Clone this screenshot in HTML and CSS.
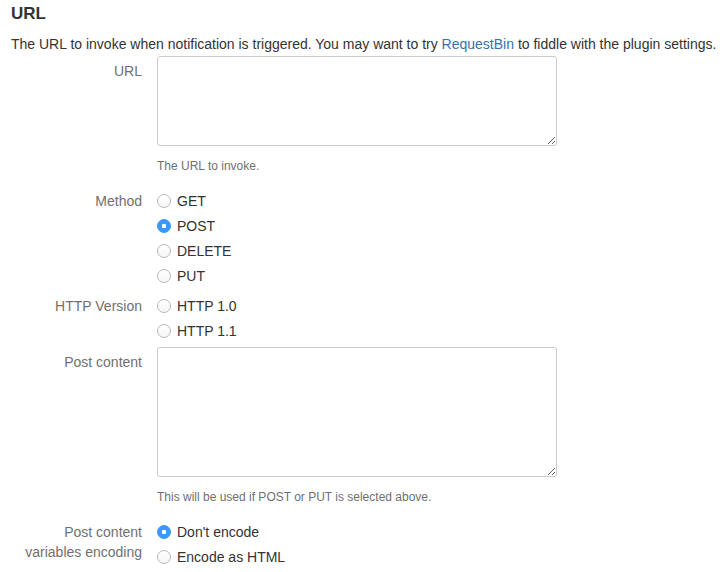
FILE: index.html
```html
<!DOCTYPE html>
<html>
<head>
<meta charset="utf-8">
<link rel="stylesheet" href="styles.css">
</head>
<body>
<div class="page">
  <h2 class="title">URL</h2>
  <p class="desc">The URL to invoke when notification is triggered. You may want to try <a href="#">RequestBin</a> to fiddle with the plugin settings.</p>

  <div class="group group-text">
    <label class="label">URL</label>
    <div class="field">
      <textarea class="textarea url"></textarea>
      <div class="help">The URL to invoke.</div>
    </div>
  </div>

  <div class="group group-radio">
    <label class="label">Method</label>
    <div class="field">
      <label class="radio"><input type="radio" name="m"><span>GET</span></label>
      <label class="radio"><input type="radio" name="m" checked><span>POST</span></label>
      <label class="radio"><input type="radio" name="m"><span>DELETE</span></label>
      <label class="radio"><input type="radio" name="m"><span>PUT</span></label>
    </div>
  </div>

  <div class="group group-radio tight">
    <label class="label">HTTP Version</label>
    <div class="field">
      <label class="radio"><input type="radio" name="v"><span>HTTP 1.0</span></label>
      <label class="radio"><input type="radio" name="v"><span>HTTP 1.1</span></label>
    </div>
  </div>

  <div class="group group-text tight2">
    <label class="label">Post content</label>
    <div class="field">
      <textarea class="textarea post"></textarea>
      <div class="help">This will be used if POST or PUT is selected above.</div>
    </div>
  </div>

  <div class="group group-radio">
    <label class="label multi">Post content<br>variables encoding</label>
    <div class="field">
      <label class="radio"><input type="radio" name="e" checked><span>Don't encode</span></label>
      <label class="radio"><input type="radio" name="e"><span>Encode as HTML</span></label>
    </div>
  </div>
</div>
</body>
</html>
```

FILE: styles.css
```css
html, body {
  margin: 0;
  padding: 0;
  background: #fff;
}
body {
  font-family: "Liberation Sans", Arial, Helvetica, sans-serif;
  font-size: 14px;
  color: #333;
}
.page {
  padding: 4px 11px 0 11px;
}
.title {
  margin: 0;
  font-size: 17px;
  line-height: 20px;
  font-weight: bold;
  color: #333;
}
.desc {
  margin: 10px 0 2px 0;
  line-height: 20px;
  white-space: nowrap;
}
.desc a {
  color: #3572b0;
  text-decoration: none;
}
.group {
  display: flex;
  gap: 15px;
}
.group-radio {
  margin-top: 12px;
}
.group-radio.tight {
  margin-top: 5px;
}
.group-text.tight2 {
  margin-top: 4px;
}
.label {
  width: 131px;
  flex: none;
  text-align: right;
  color: #707070;
  line-height: 20px;
}
.group-text .label {
  padding-top: 5px;
}
.group-radio .label {
  padding-top: 3px;
}
.field {
  display: flex;
  flex-direction: column;
}
.textarea {
  box-sizing: border-box;
  width: 400px;
  border: 1px solid #ccc;
  border-radius: 3px;
  margin: 0;
  padding: 4px 6px;
  font-family: inherit;
  font-size: 14px;
  display: block;
  resize: both;
}
.textarea.url { height: 90px; }
.textarea.post { height: 130px; }
.help {
  margin-top: 10px;
  font-size: 12px;
  line-height: 20px;
  color: #707070;
}
.radio {
  display: flex;
  align-items: center;
  gap: 6px;
  height: 25px;
  line-height: 20px;
  color: #333;
}
.radio input {
  -webkit-appearance: none;
  appearance: none;
  margin: 0;
  width: 14px;
  height: 14px;
  box-sizing: border-box;
  border-radius: 50%;
  border: 1px solid #b8b8b8;
  background: linear-gradient(#fff, #f6f6f6);
  flex: none;
}
.radio input:checked {
  border: 1px solid #3a94f5;
  background: radial-gradient(circle, #fff 0 2px, #3b99fc 2.5px);
}
```
